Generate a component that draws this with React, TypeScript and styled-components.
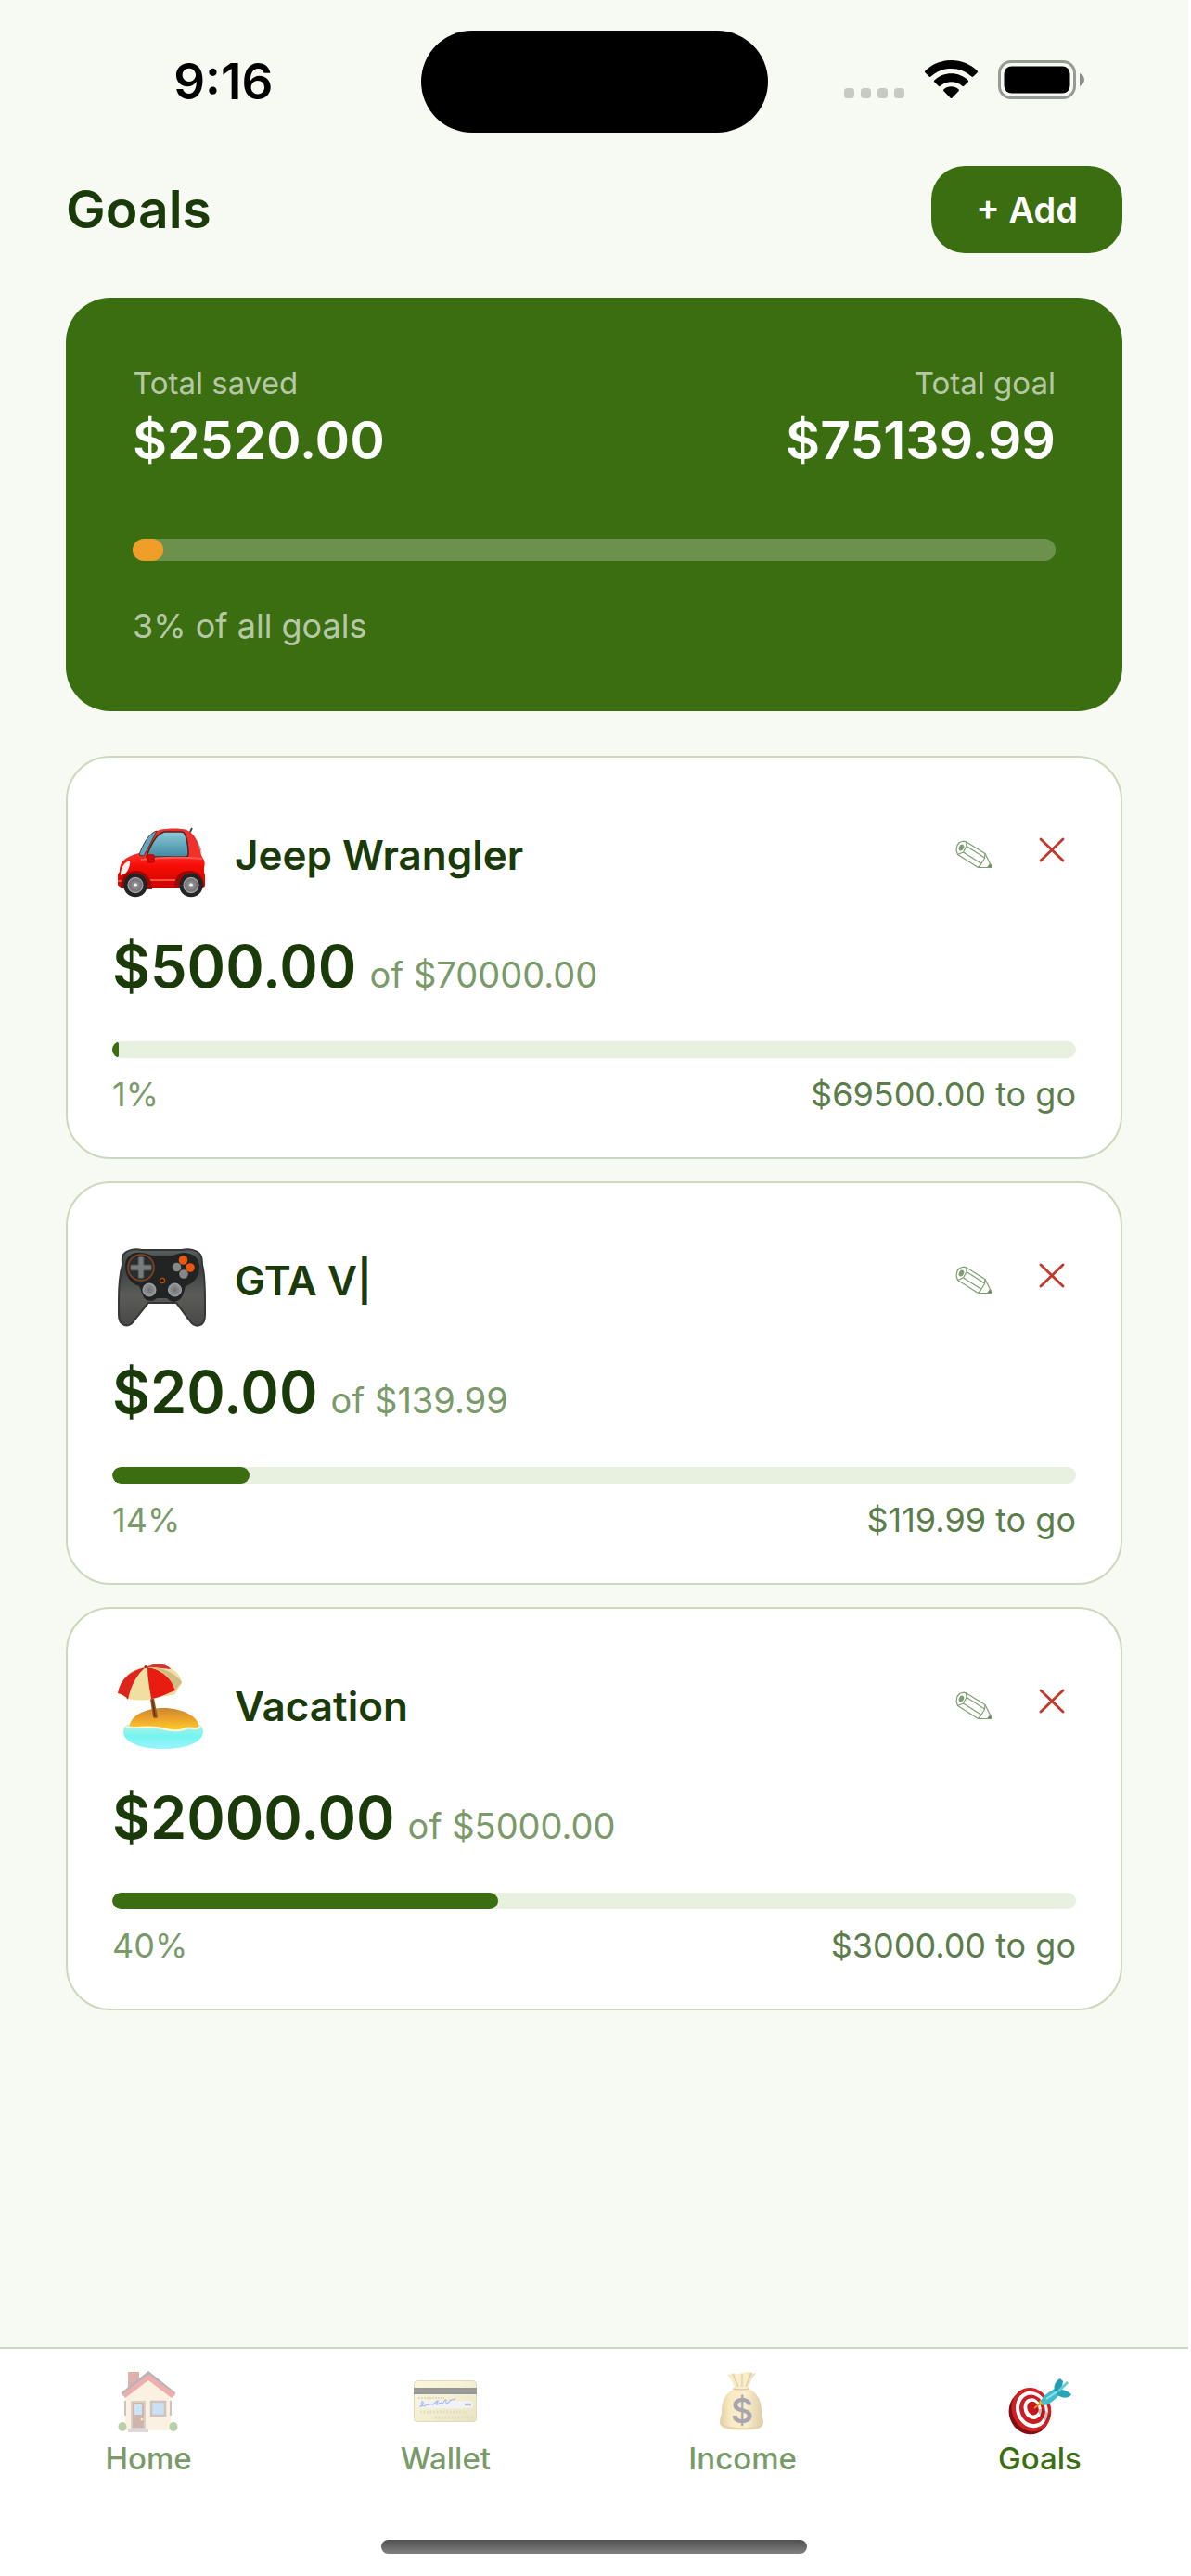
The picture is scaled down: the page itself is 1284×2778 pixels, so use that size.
import React from "react";
import styled, { createGlobalStyle } from "styled-components";

const color = {
  page: "#f6faf2",
  green: "#3b6d11",
  ink: "#1a3a0a",
  muted: "#7a9a6a",
  mid: "#5a7d4a",
  line: "#cbd8bd",
  track: "#e8f0df",
  orange: "#ef9f27",
  red: "#c0392b",
};

const GlobalStyle = createGlobalStyle`
  *, *::before, *::after { box-sizing: border-box; }
  body {
    margin: 0;
    background: #ffffff;
    font-family: Inter, "Liberation Sans", sans-serif;
  }
  h1, h2, p, ul { margin: 0; padding: 0; }
  ul { list-style: none; }
  button { font-family: inherit; border: 0; margin: 0; cursor: pointer; }
  svg { display: block; }
`;

const Screen = styled.div`
  display: flex;
  flex-direction: column;
  min-height: 100vh;
  margin-right: 3px;
  background: ${color.page};
`;

const StatusBar = styled.div`
  display: grid;
  grid-template-columns: 1fr 374px 1fr;
  align-items: center;
  padding-top: 33px;
`;

const Time = styled.span`
  padding-left: 28px;
  text-align: center;
  font-size: 53px;
  line-height: 60px;
  font-weight: 600;
  color: #000000;
`;

const Island = styled.div`
  height: 110px;
  border-radius: 55px;
  background: #000000;
`;

const StatusIcons = styled.div`
  display: flex;
  justify-content: flex-end;
  align-items: center;
  gap: 22px;
  padding: 0 112px 4px 0;
`;

const Main = styled.main`
  padding: 36px 71px 48px;
`;

const Header = styled.header`
  display: flex;
  justify-content: space-between;
  align-items: center;
`;

const Title = styled.h1`
  font-size: 57px;
  line-height: 72px;
  font-weight: 600;
  color: ${color.ink};
`;

const AddButton = styled.button`
  padding: 24px 48px;
  border-radius: 36px;
  background: ${color.green};
  color: #ffffff;
  font-size: 38px;
  line-height: 46px;
  font-weight: 600;
`;

const Summary = styled.section`
  margin-top: 48px;
  padding: 72px;
  border-radius: 48px;
  background: ${color.green};
`;

const Totals = styled.div`
  display: flex;
  justify-content: space-between;
`;

const Total = styled.div<{ $align: "left" | "right" }>`
  text-align: ${(p) => p.$align};
`;

const SummaryLabel = styled.p<{ $size: number }>`
  font-size: ${(p) => p.$size}px;
  line-height: 40px;
  color: rgba(255, 255, 255, 0.65);
`;

const TotalValue = styled.p`
  margin-top: 6px;
  font-size: 57px;
  line-height: 72px;
  font-weight: 600;
  color: #ffffff;
`;

const SummaryTrack = styled.div`
  height: 24px;
  margin: 70px 0 50px;
  border-radius: 12px;
  overflow: hidden;
  background: rgba(255, 255, 255, 0.25);
`;

const SummaryFill = styled.div`
  height: 100%;
  border-radius: 12px;
  background: ${color.orange};
`;

const GoalList = styled.ul`
  display: grid;
  gap: 24px;
  margin-top: 48px;
`;

const GoalCard = styled.li`
  padding: 48px;
  border: 2px solid ${color.line};
  border-radius: 48px;
  background: #ffffff;
`;

const GoalHeader = styled.div`
  display: flex;
  align-items: center;
`;

const GoalName = styled.h2`
  flex: 1;
  margin-left: 28px;
  font-size: 44px;
  line-height: 54px;
  font-weight: 600;
  color: ${color.ink};
`;

const Actions = styled.div`
  display: flex;
  gap: 35px;
`;

const IconButton = styled.button`
  width: 50px;
  height: 50px;
  padding: 0;
  background: transparent;
`;

const Amounts = styled.p`
  display: flex;
  align-items: baseline;
  gap: 14px;
  margin-top: 24px;
`;

const Saved = styled.span`
  font-size: 63px;
  line-height: 78px;
  font-weight: 600;
  color: ${color.ink};
`;

const Target = styled.span`
  font-size: 38px;
  line-height: 46px;
  color: ${color.muted};
`;

const Track = styled.div`
  height: 18px;
  margin-top: 42px;
  border-radius: 9px;
  overflow: hidden;
  background: ${color.track};
`;

const Fill = styled.div`
  height: 100%;
  border-radius: 9px;
  background: ${color.green};
`;

const Meta = styled.div`
  display: flex;
  justify-content: space-between;
  margin-top: 20px;
  font-size: 36px;
  line-height: 39px;
  color: ${color.muted};
`;

const Remaining = styled.span`
  color: ${color.mid};
`;

const TabBar = styled.nav`
  margin-top: auto;
  padding: 22px 0 24px;
  border-top: 2px solid ${color.line};
  background: #ffffff;
`;

const Tabs = styled.div`
  display: grid;
  grid-template-columns: repeat(4, 1fr);
`;

const Tab = styled.a<{ $active: boolean }>`
  display: flex;
  flex-direction: column;
  align-items: center;
  gap: 4px;
  font-size: 33px;
  line-height: 40px;
  font-weight: 500;
  text-decoration: none;
  color: ${(p) => (p.$active ? color.green : color.muted)};

  svg {
    opacity: ${(p) => (p.$active ? 1 : 0.4)};
  }
`;

const HomeIndicator = styled.div`
  width: 459px;
  max-width: 60%;
  height: 15px;
  margin: 68px auto 0;
  border-radius: 8px;
  background: linear-gradient(#505050, #808080);
`;

const SignalIcon = () => (
  <svg width="65" height="42" viewBox="0 0 65 42" aria-hidden="true">
    {[0, 18, 36, 54].map((x) => (
      <rect key={x} x={x} y="30" width="11" height="11" rx="3.5" fill="#c6cac2" />
    ))}
  </svg>
);

const WifiIcon = () => (
  <svg width="57" height="42" viewBox="0 0 57 42" aria-hidden="true">
    <path d="M28.500 0C39.500 0 49.500 4.300 56.500 11.300q1 1 0 2.100L52.300 17.600q-.9.900-1.900 0C44.600 12.200 37 8.900 28.500 8.900S12.400 12.200 6.600 17.600q-1 .9-1.900 0L.5 13.400q-1-1.100 0-2.100C7.500 4.300 17.500 0 28.500 0Z" />
    <path d="M28.500 14.200c7 0 13.400 2.700 18.100 7.200q1 1 0 2L42.200 27.800q-.9.900-1.900 0c-3.200-2.800-7.300-4.500-11.800-4.500s-8.600 1.700-11.800 4.500q-1 .9-1.900 0L10.400 23.400q-1-1 0-2c4.700-4.500 11.100-7.200 18.100-7.200Z" />
    <path d="M28.500 28.200c3.100 0 5.900 1.100 8 3q1 .9 0 2L29.500 40.600q-1 1-2 0L20.500 33.200q-1-1.100 0-2c2.100-1.900 4.900-3 8-3Z" />
  </svg>
);

const BatteryIcon = () => (
  <svg width="93" height="42" viewBox="0 0 93 42" aria-hidden="true">
    <rect x="1.500" y="1.500" width="81" height="39" rx="12.500" fill="none" stroke="#979b94" strokeWidth="3" />
    <rect x="6.500" y="6.500" width="71" height="29" rx="8" />
    <path d="M88 14c3 1.200 5 4 5 7s-2 5.800-5 7Z" fill="#8b8f88" />
  </svg>
);

const CarIcon = () => (
  <svg width="104" height="114" viewBox="0 0 104 114" aria-hidden="true">
    <defs>
      <linearGradient id="carBody" x1="0" y1="0" x2="0" y2="1">
        <stop offset="0" stopColor="#e8302a" />
        <stop offset=".45" stopColor="#f5302a" />
        <stop offset=".62" stopColor="#f80d06" />
        <stop offset="1" stopColor="#c90500" />
      </linearGradient>
      <linearGradient id="carGlass" x1="0" y1="0" x2="0" y2="1">
        <stop offset="0" stopColor="#8cc9d6" />
        <stop offset="1" stopColor="#3f8ba3" />
      </linearGradient>
      <radialGradient id="carHub">
        <stop offset="0" stopColor="#e0e0e0" />
        <stop offset=".35" stopColor="#8d8d8f" />
        <stop offset="1" stopColor="#6d6d70" />
      </radialGradient>
    </defs>
    <path d="M83 34 86 28" stroke="#444" strokeWidth="1.800" />
    <path d="M31 57C35 45 42 32 51 30 60 28 74 28 80 30c9 4 14 14 16 27l2 4c2 2 2 6 1 10l0 5c1 1 1 3 1 5v9c0 2-1 3-3 3H12c-4 0-6-2-6-5v-9c0-2 1-3 2-4 0-10 5-16 21-20Z" fill="url(#carBody)" />
    <path d="M29 57C33 45 40 33 48 31L41 45 34 58Z" fill="#5ea9bf" stroke="#5c3030" strokeWidth="1" />
    <path d="M37 59C41 47 47 36 54 33q1-1 3-1H74c3 0 4 1 5 4 2 6 3 13 3 20q0 3-3 3Z" fill="url(#carGlass)" stroke="#4d2524" strokeWidth="1.500" />
    <path d="M90 39c4 5 6 11 7 17Z" fill="#7db6c6" />
    <path d="M31 62q34-4 66-1" fill="none" stroke="#ff5a50" strokeWidth="2" />
    <path d="M9 79C9 70 13 65 19 63c1 5-2 11-5 14Z" fill="#fff0ed" />
    <rect x="37" y="56" width="9" height="10" rx="3" fill="#c90b06" />
    <path d="M6 85h7M38 84H68" stroke="#ff6a5c" strokeWidth="1.500" />
    <path d="M9 93C9 77 18 74 26 74s17 6 17 20Z" fill="#9b0905" />
    <path d="M67 93C67 77 76 74 84 74s15 6 15 18Z" fill="#9b0905" />
    {[25, 85].map((x) => (
      <g key={x}>
        <circle cx={x} cy="89.500" r="12.800" fill="#232325" />
        <circle cx={x} cy="89.500" r="8" fill="url(#carHub)" stroke="#a5a5a8" strokeWidth="1.300" />
        <circle cx={x} cy="89.500" r="2" fill="#eee" />
      </g>
    ))}
  </svg>
);

const GamepadIcon = () => (
  <svg width="104" height="114" viewBox="0 0 104 114" aria-hidden="true">
    <defs>
      <linearGradient id="padBody" x1="0" y1="0" x2="0" y2="1">
        <stop offset="0" stopColor="#586060" />
        <stop offset=".25" stopColor="#3b4040" />
        <stop offset=".6" stopColor="#5b5c59" />
        <stop offset="1" stopColor="#484946" />
      </linearGradient>
      <radialGradient id="padStick">
        <stop offset="0" stopColor="#6d6e70" />
        <stop offset="1" stopColor="#96989b" />
      </radialGradient>
    </defs>
    <path d="M12 29C16 24 24 22 32 24H75c8-2 16 0 20 5 2 3 2 7 2 11 3 10 3 24 3 40v14c0 14-11 14-16 7L69 81H39L23 101C18 108 7 107 7 94V78C7 63 8 50 11 40c0-4-1-8 1-11Z" fill="url(#padBody)" stroke="#353635" strokeWidth="2" />
    <path d="M14 41C14 31 22 26 30 27c8 0 11 3 14 3H64c3 0 7-3 13-3 9 0 17 5 17 15 0 12-7 18-15 21-1 3-2 9-4 12-4 6-12 6-16 1H48c-5 5-13 3-15-3-2-4-2-7-4-10C19 60 14 51 14 41Z" fill="#222424" />
    <circle cx="31" cy="43" r="14" fill="#282c2d" stroke="#84451f" strokeWidth="1.500" />
    <path d="M28 32q3-2 6 0v8h8q1 3 0 6h-8v8q-3 1-6 0v-8h-8q-1-3 0-6h8Z" fill="#777b7b" stroke="#454a4a" strokeWidth="1" />
    <circle cx="76.500" cy="35" r="4.800" fill="#eb570b" />
    <circle cx="84" cy="43" r="4.800" fill="#eb570b" />
    <circle cx="69.500" cy="42.500" r="4.800" fill="#858789" />
    <circle cx="77" cy="50" r="4.800" fill="#858789" />
    <circle cx="54" cy="57" r="2.600" fill="#2b1607" stroke="#a85415" strokeWidth="1.300" />
    <circle cx="40" cy="67" r="7" fill="url(#padStick)" stroke="#a4a6a8" strokeWidth="1" />
    <circle cx="67.500" cy="67" r="7" fill="url(#padStick)" stroke="#a4a6a8" strokeWidth="1" />
  </svg>
);

const BeachIcon = () => (
  <svg width="104" height="114" viewBox="0 0 104 114" aria-hidden="true">
    <defs>
      <linearGradient id="beachSea" x1="0" y1="0" x2="0" y2="1">
        <stop offset="0" stopColor="#c5efdc" />
        <stop offset=".5" stopColor="#74f5f1" />
        <stop offset="1" stopColor="#9af4fb" />
      </linearGradient>
      <linearGradient id="beachSand" x1="0" y1="0" x2="0" y2="1">
        <stop offset="0" stopColor="#c98732" />
        <stop offset=".5" stopColor="#eda52c" />
        <stop offset="1" stopColor="#fbd128" />
      </linearGradient>
    </defs>
    <path d="M12 84C12 76 22 74 33 75H82c9-1 16 2 16 9 0 12-18 19-43 19S12 96 12 84Z" fill="url(#beachSea)" />
    <path d="M19 81C17 69 34 59 55 59s40 10 38 21c-4 5-10-1-15 2-8 3-17 0-27-2-12-2-23 0-32 1Z" fill="url(#beachSand)" />
    <path d="M15 79c10 3 17-1 33 1 12 2 19 5 29 2 7-5 12 3 18-3" fill="none" stroke="#fff9df" strokeWidth="2" />
    <path d="M40 43h4l5 26q-3 2-5 0Z" fill="#9b541f" />
    <path d="M42 43 46 68" stroke="#50301b" strokeWidth="1.300" />
    <path d="M6 43C8 30 18 17 35 15c19-7 38 2 40 17-2 4-5 7-7 12-8 2-15 2-24 5-10 2-19 2-26 0Z" fill="#f0dfa1" />
    <path d="M36 15C20 18 9 27 6 43c5 1 8 3 11 7C20 35 26 23 36 15Z" fill="#df241f" />
    <path d="M38 15c0 13 3 25 4 34 10-1 17-6 26-9C65 28 53 17 38 15Z" fill="#e91c12" />
    <path d="M36 15c14-7 25-2 27 2-8-1-16-2-27-2Z" fill="#d5342c" />
    <path d="M36 15c15 0 28 10 32 26 2-5 5-7 7-10C68 20 49 13 36 15Z" fill="#d0bd83" />
    <circle cx="36" cy="14.500" r="1.600" fill="#a62822" />
  </svg>
);

const PencilIcon = () => (
  <svg width="50" height="50" viewBox="0 0 50 50" fill="none" stroke="#7f9e70" strokeWidth="1.200" strokeLinejoin="round" aria-hidden="true">
    <path d="M7 14.500 9.500 11.500 13.500 10.200 16.500 10.800 37 23.500 44 37.500 43 38.500H29.500L7.500 24.500 6 20Z" />
    <path d="M16.500 10.800 17 15.500 13.500 22 7.500 24.500M17 15.500 36.500 28M13.500 22 32.500 34M37 23.500 36.500 28.500 32.500 35 29.500 38.500" />
    <ellipse cx="11.500" cy="17" rx="2" ry="3" transform="rotate(25 11.500 17)" fill="#7f9e70" />
    <path d="M44 38.500 42.500 34.500 39.500 38.500Z" fill="#5f8050" />
  </svg>
);

const CrossIcon = () => (
  <svg width="50" height="50" viewBox="0 0 50 50" stroke={color.red} strokeWidth="2.900" strokeLinecap="round" aria-hidden="true">
    <path d="M12 8 36 31M36 8 12 31" />
  </svg>
);

const HomeIcon = () => (
  <svg width="72" height="72" viewBox="0 0 72 72" aria-hidden="true">
    <path d="M14 3H26V23H14Z" fill="#b2382f" />
    <path d="M11 29 36 8 60 29V66H11Z" fill="#f6deb9" />
    <path d="M7 25 36 2 65 25 64 29 36 6 8 29Z" fill="#4a4a50" />
    <path d="M8 27 36 5.500 65 27 61 31 36 12 11 31Z" fill="#d8352f" />
    <path d="M18 35H32V64H18Z" fill="#854532" stroke="#a68670" strokeWidth="2" />
    <path d="M21 38H29V49H21Z" fill="#80c0ec" />
    <circle cx="29" cy="54" r="1.500" fill="#f4c24d" />
    <path d="M39 35H54V50H39Z" fill="#77b5e4" stroke="#906855" strokeWidth="2.500" />
    <path d="M11 34V50M60 34V50" stroke="#8e6656" strokeWidth="2" />
    <path d="M14 64H36V68H14Z" fill="#aaa29e" />
    <ellipse cx="8" cy="62" rx="4.500" ry="5" fill="#4d8b2d" />
    <ellipse cx="63" cy="62" rx="4.500" ry="5" fill="#4d8b2d" />
  </svg>
);

const CreditCardIcon = () => (
  <svg width="72" height="72" viewBox="0 0 72 72" aria-hidden="true">
    <defs>
      <linearGradient id="cardGold" x1="0" y1="0" x2="1" y2="1">
        <stop offset="0" stopColor="#f8ea9e" />
        <stop offset=".4" stopColor="#eadf98" />
        <stop offset="1" stopColor="#c9ba6c" />
      </linearGradient>
    </defs>
    <rect x="2.500" y="12.500" width="67" height="44" rx="3" fill="url(#cardGold)" stroke="#b0a468" />
    <path d="M2 20H70V27H2Z" fill="#000000" />
    <path d="M7 31H35" stroke="#9d946d" strokeWidth="1.500" strokeDasharray="2 1" />
    <rect x="6" y="34" width="60" height="8" rx="3" fill="#dedff0" />
    <path d="M8 40c5 1 5-6 3-5s1 7 4 4 1 1 4-1 2 2 5-1 5-4 4-2-4 5 1 2 3 2 5-1 3-5 3-1 1 2 4-1 4 1 6-3" fill="none" stroke="#355ac0" strokeWidth="1.200" />
    <path d="M57 38H64" stroke="#555" strokeWidth="2.500" />
    <path d="M9 46H60M25 52H66" stroke="#b8ac70" strokeWidth="3" strokeDasharray="2 1.500" />
  </svg>
);

const MoneyBagIcon = () => (
  <svg width="72" height="72" viewBox="0 0 72 72" aria-hidden="true">
    <defs>
      <linearGradient id="bagCloth">
        <stop offset="0" stopColor="#b98a28" />
        <stop offset=".25" stopColor="#f0cf6c" />
        <stop offset=".6" stopColor="#f6d87e" />
        <stop offset="1" stopColor="#ab7c24" />
      </linearGradient>
    </defs>
    <path d="M27 21C25 12 21 8 19 6q4 0 6-2 5 2 10 0 5-1 10-1 1 3 5 1C46 9 43 14 42 21c10 4 14 14 14 24 0 5 2 7 2 12 0 7-8 9-23 9s-24-2-24-9c0-5 2-7 2-12 0-10 4-20 14-24Z" fill="url(#bagCloth)" />
    <path d="M25 21q9 2 18 0M25 5l6 14M45 4l-6 15M35 5v14" fill="none" stroke="#a97f31" strokeWidth="1.300" />
    <path d="M12 58q4 6 23 6t22-6" fill="none" stroke="#b78b34" strokeWidth="1.500" />
    <text x="35" y="58" textAnchor="middle" fontFamily="Inter, sans-serif" fontSize="37" fontWeight="600" fill="#2a2038">$</text>
  </svg>
);

const DartIcon = () => (
  <svg width="72" height="72" viewBox="0 0 72 72" aria-hidden="true">
    <g transform="rotate(-20 26 44)">
      <ellipse cx="24" cy="46" rx="22" ry="24" fill="#830e12" />
      <ellipse cx="27" cy="44" rx="21" ry="24" fill="#ce2025" />
      <ellipse cx="27.500" cy="44" rx="17" ry="20" fill="#fff" />
      <ellipse cx="28" cy="44" rx="13.500" ry="16" fill="#ca1d23" />
      <ellipse cx="28.500" cy="43.500" rx="9.500" ry="11.500" fill="#fff" />
      <ellipse cx="29" cy="43" rx="6" ry="7.500" fill="#c8171d" />
    </g>
    <path d="M40 43 48 50 43 57 31 43Z" fill="#6e1012" opacity=".3" />
    <path d="M30 42 39 35" stroke="#d09918" strokeWidth="2" />
    <path d="M36 33 42 38 39 39 35 37Z" fill="#e0bc18" />
    <path d="M37 34C39 29 46 24 54 20L59 25C54 32 45 39 40 39Z" fill="#43bccb" />
    <path d="M52 24C50 17 54 12 58 10L61 13 60 19 56 24Z" fill="#249bae" />
    <path d="M55 24C59 20 65 23 70 27 67 32 60 32 54 27Z" fill="#2aa4b5" />
    <path d="M56 24 66 14" stroke="#65cbd7" strokeWidth="3" />
    <path d="M43 32 55 24" stroke="#8ee4ec" strokeWidth="2" />
  </svg>
);

type Goal = {
  name: string;
  icon: React.ReactNode;
  saved: number;
  target: number;
};

const goals: Goal[] = [
  { name: "Jeep Wrangler", icon: <CarIcon />, saved: 500, target: 70000 },
  { name: "GTA V|", icon: <GamepadIcon />, saved: 20, target: 139.99 },
  { name: "Vacation", icon: <BeachIcon />, saved: 2000, target: 5000 },
];

const tabs = [
  { label: "Home", icon: <HomeIcon />, active: false },
  { label: "Wallet", icon: <CreditCardIcon />, active: false },
  { label: "Income", icon: <MoneyBagIcon />, active: false },
  { label: "Goals", icon: <DartIcon />, active: true },
];

const money = (value: number) => `$${value.toFixed(2)}`;

const GoalItem = ({ goal }: { goal: Goal }) => {
  const percent = (goal.saved / goal.target) * 100;
  return (
    <GoalCard>
      <GoalHeader>
        {goal.icon}
        <GoalName>{goal.name}</GoalName>
        <Actions>
          <IconButton type="button" aria-label={`Edit ${goal.name}`}>
            <PencilIcon />
          </IconButton>
          <IconButton type="button" aria-label={`Delete ${goal.name}`}>
            <CrossIcon />
          </IconButton>
        </Actions>
      </GoalHeader>
      <Amounts>
        <Saved>{money(goal.saved)}</Saved>
        <Target>of {money(goal.target)}</Target>
      </Amounts>
      <Track role="progressbar" aria-label={goal.name} aria-valuenow={Math.round(percent)}>
        <Fill style={{ width: `${percent}%` }} />
      </Track>
      <Meta>
        <span>{Math.round(percent)}%</span>
        <Remaining>{money(goal.target - goal.saved)} to go</Remaining>
      </Meta>
    </GoalCard>
  );
};

export default function App() {
  const saved = goals.reduce((sum, goal) => sum + goal.saved, 0);
  const target = goals.reduce((sum, goal) => sum + goal.target, 0);
  const percent = (saved / target) * 100;

  return (
    <>
      <GlobalStyle />
      <Screen>
        <StatusBar>
          <Time>9:16</Time>
          <Island />
          <StatusIcons>
            <SignalIcon />
            <WifiIcon />
            <BatteryIcon />
          </StatusIcons>
        </StatusBar>
        <Main>
          <Header>
            <Title>Goals</Title>
            <AddButton type="button">+ Add</AddButton>
          </Header>
          <Summary>
            <Totals>
              <Total $align="left">
                <SummaryLabel $size={33}>Total saved</SummaryLabel>
                <TotalValue>{money(saved)}</TotalValue>
              </Total>
              <Total $align="right">
                <SummaryLabel $size={33}>Total goal</SummaryLabel>
                <TotalValue>{money(target)}</TotalValue>
              </Total>
            </Totals>
            <SummaryTrack role="progressbar" aria-label="All goals" aria-valuenow={Math.round(percent)}>
              <SummaryFill style={{ width: `${percent}%` }} />
            </SummaryTrack>
            <SummaryLabel $size={36}>{Math.round(percent)}% of all goals</SummaryLabel>
          </Summary>
          <GoalList>
            {goals.map((goal) => (
              <GoalItem key={goal.name} goal={goal} />
            ))}
          </GoalList>
        </Main>
        <TabBar aria-label="Main">
          <Tabs>
            {tabs.map((tab) => (
              <Tab key={tab.label} href="#" $active={tab.active} aria-current={tab.active ? "page" : undefined}>
                {tab.icon}
                {tab.label}
              </Tab>
            ))}
          </Tabs>
          <HomeIndicator />
        </TabBar>
      </Screen>
    </>
  );
}
